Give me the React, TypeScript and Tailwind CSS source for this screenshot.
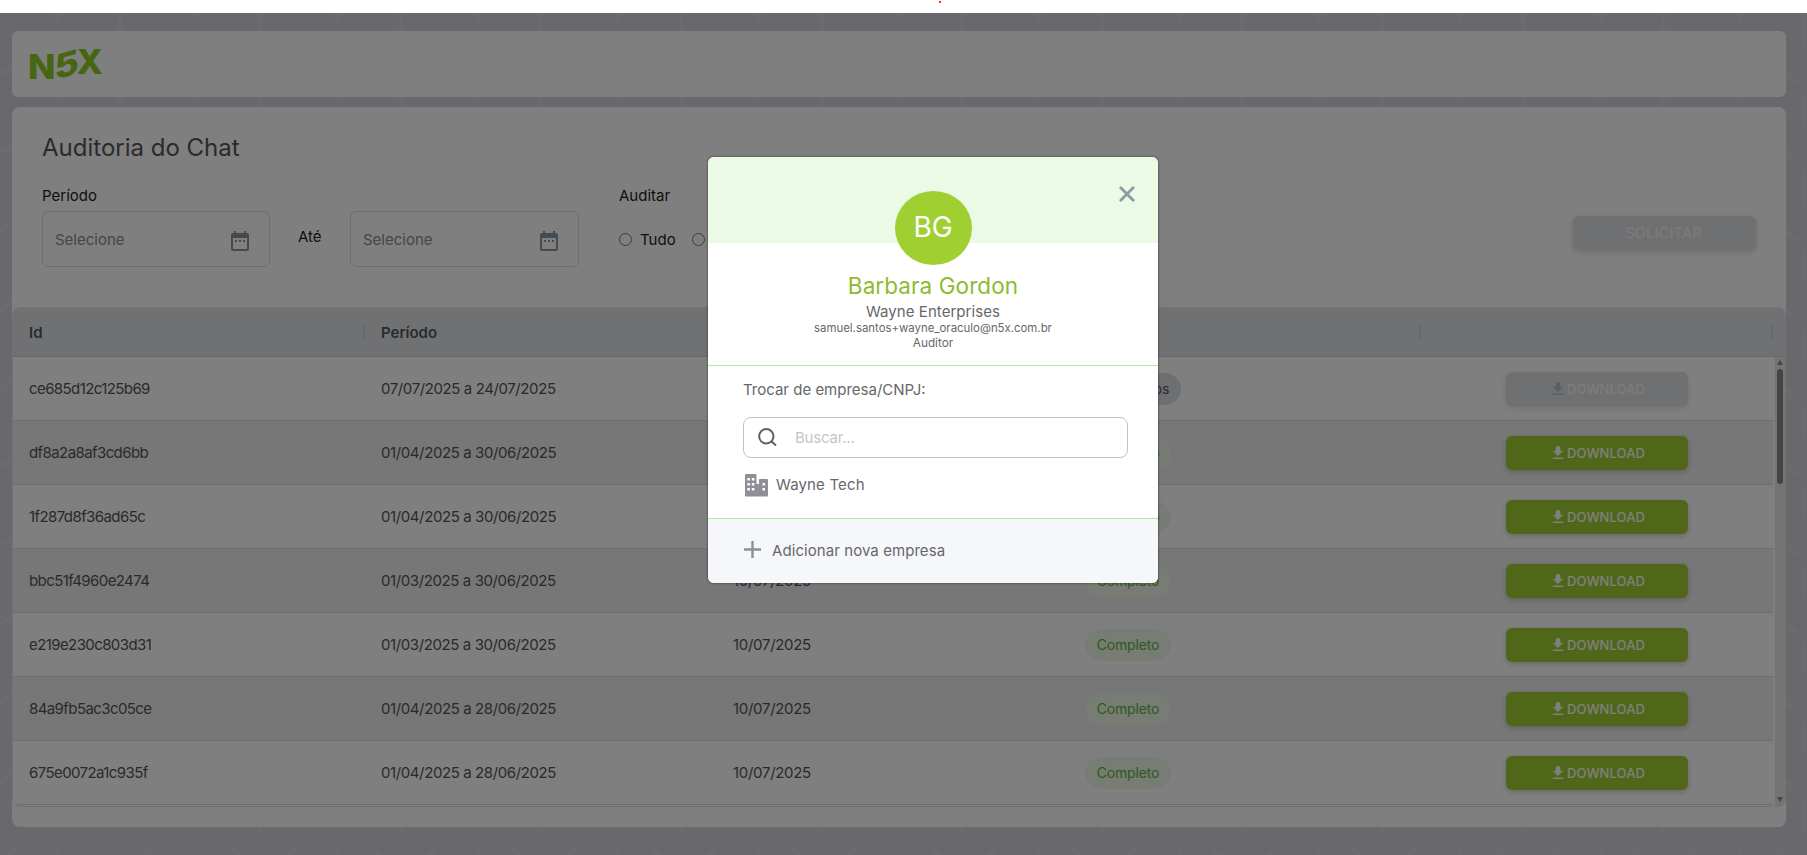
import { MdDownload, MdDateRange } from "react-icons/md";

const rows = [
  { id: "ce685d12c125b69", period: "07/07/2025 a 24/07/2025", date: "24/07/2025", done: false },
  { id: "df8a2a8af3cd6bb", period: "01/04/2025 a 30/06/2025", date: "10/07/2025", done: true },
  { id: "1f287d8f36ad65c", period: "01/04/2025 a 30/06/2025", date: "10/07/2025", done: true },
  { id: "bbc51f4960e2474", period: "01/03/2025 a 30/06/2025", date: "10/07/2025", done: true },
  { id: "e219e230c803d31", period: "01/03/2025 a 30/06/2025", date: "10/07/2025", done: true },
  { id: "84a9fb5ac3c05ce", period: "01/04/2025 a 28/06/2025", date: "10/07/2025", done: true },
  { id: "675e0072a1c935f", period: "01/04/2025 a 28/06/2025", date: "10/07/2025", done: true },
];

const columns = ["Id", "Período", "Data", "Status", ""];

function Backdrop() {
  return (
    <svg className="absolute inset-0 h-full w-full">
      <defs>
        <pattern id="cubes" width="140.3" height="78.5" patternUnits="userSpaceOnUse" patternTransform="translate(0 -13)">
          <g stroke="#d6d9df" strokeWidth="3.5" fill="none">
            <path d="M57 0V22M57 65V79M120 15V47" />
            <path d="M-10 84L15 63M130.3 84L155.3 63M90 63L114 84" />
            <path d="M-10 5.5L15 -15.5M130.3 5.5L155.3 -15.5M90 -15.5L114 5.5" />
          </g>
        </pattern>
      </defs>
      <rect width="100%" height="100%" fill="url(#cubes)" />
    </svg>
  );
}

function Logo() {
  return (
    <svg width="100" height="60" viewBox="0 0 100 60" className="ml-2" fill="#8ccc22" fontFamily="Inter, sans-serif" fontWeight="800" fontSize="34">
      <text transform="translate(8 45) scale(1.06 1)">N</text>
      <text transform="translate(34.500 46) skewY(-16) scale(1.1 1)">5</text>
      <text transform="translate(56.500 40) scale(1.02 1)">X</text>
    </svg>
  );
}

function DateField() {
  return (
    <div className="flex h-14 w-full items-center justify-between rounded-md border border-[#dcdcdc] pl-3 pr-[17px]">
      <span className="pt-0.5 text-[15px] text-[#8c8c8c]">Selecione</span>
      <MdDateRange className="mt-1 size-6 text-[#8694a0]" />
    </div>
  );
}

function Filters() {
  return (
    <div className="flex h-[72px] items-start text-[15px]">
      <div className="w-[228px]">
        <div className="h-[27px] pt-px leading-[22px]">Período</div>
        <DateField />
      </div>
      <div className="w-20 pl-7 pt-[42px] leading-[22px]">Até</div>
      <div className="w-[229px] pt-[27px]">
        <DateField />
      </div>
      <div className="ml-10 pt-px">
        <div className="leading-[22px]">Auditar</div>
        <div className="mt-[22px] flex items-center leading-[22px]">
          <span className="mb-0.5 mr-2 size-[13px] rounded-full border border-[#767676]" />
          Tudo
          <span className="mb-0.5 ml-4 mr-2 size-[13px] rounded-full border border-[#767676]" />
          Sala
        </div>
      </div>
      <button className="ml-auto mr-[30px] mt-8 h-[34px] w-[183px] rounded-md bg-[#dde0e3] pr-0.5 pt-px text-[15px] text-[#f8f9fa] shadow-[0_2px_6px_rgba(0,0,0,0.15)]">
        SOLICITAR
      </button>
    </div>
  );
}

function Table() {
  return (
    <div className="mt-[51px] h-[500px] overflow-hidden rounded-lg border border-[#e6e6e6]">
      <div className="flex h-[49px] border-b border-[#d0d0d3] bg-[#e1e3e5]">
        {columns.map((name, i) => (
          <div key={i} className="flex w-[352px] items-center justify-between pl-4 text-[15px] font-semibold text-[#55565a]">
            <span className="pt-0.5">{name}</span>
            <span className="h-[14px] w-0.5 bg-[#d0d2d4]" />
          </div>
        ))}
      </div>
      <div className="flex h-[449px]">
        <div className="w-[1760px]">
          {rows.map((row) => (
            <div key={row.id} className="flex h-16 items-center border-b border-[#dcdcdc] text-[15px] text-[#545458] even:bg-[#efefef]">
              <div className="w-[352px] pl-4 pt-0.5 tracking-[-0.59px]">{row.id}</div>
              <div className="w-[352px] pl-4 pt-0.5 tracking-[-0.4px]">{row.period}</div>
              <div className="w-[352px] pl-4 pt-0.5 tracking-[-0.3px]">{row.date}</div>
              <div className="w-[352px] pl-4">
                {row.done ? (
                  <span className="flex h-8 w-[86px] items-center justify-center rounded-full bg-[#eef9ea] text-sm tracking-[-0.15px] text-[#62b535]">Completo</span>
                ) : (
                  <span className="flex h-8 w-24 items-center justify-center rounded-full bg-[#dcdfe4] text-sm tracking-[-0.2px]">Sem dados</span>
                )}
              </div>
              <div className="flex w-[352px] justify-center">
                <button
                  className={
                    row.done
                      ? "flex h-[34px] w-[182px] items-center justify-center rounded-md bg-[#a0ce32] text-[13px] font-medium text-white shadow-[0_2px_6px_rgba(0,0,0,0.18)]"
                      : "flex h-[34px] w-[182px] items-center justify-center rounded-md bg-[#dde0e3] text-[13px] font-medium text-[#f8f9fa] shadow-[0_2px_6px_rgba(0,0,0,0.12)]"
                  }
                >
                  <MdDownload className={row.done ? "mt-px size-[18px]" : "mt-px size-[18px] text-[#b9bdc6]"} />
                  <span className="pt-0.5 tracking-[0.1px]">DOWNLOAD</span>
                </button>
              </div>
            </div>
          ))}
        </div>
        <div className="ml-0.5 flex flex-1 flex-col items-center bg-[#e8e8e8] pt-[3px]">
          <span className="border-x-[3px] border-b-[5px] border-x-transparent border-b-[#888]" />
          <span className="mt-1 h-[115px] w-1.5 rounded-full bg-[#888]" />
          <span className="mb-1 mt-auto border-x-[3px] border-t-[5px] border-x-transparent border-t-[#888]" />
        </div>
      </div>
    </div>
  );
}

function ProfileModal() {
  return (
    <div className="absolute left-[708px] top-[144px] flex h-[426px] w-[450px] flex-col overflow-hidden rounded-md bg-white text-base text-[#66676a] shadow-[0_0_2px_1px_rgba(0,0,0,0.25)]">
      <div className="relative flex h-[86px] shrink-0 justify-center bg-[#eafae5]">
        <div className="mt-[34px] flex h-[74px] w-[77px] items-center justify-center rounded-[50%] bg-[#a0cf32] pb-0.5 text-[28px] text-white">BG</div>
        <svg width="16" height="16" viewBox="0 0 16 16" className="absolute right-[23px] top-[29px]" stroke="#8b9ba1" strokeWidth="2.8" strokeLinecap="round">
          <path d="M1.8 1.8L14.2 14.2M14.2 1.8L1.8 14.2" />
        </svg>
      </div>
      <div className="flex h-[123px] shrink-0 flex-col items-center border-b border-[#b2e99a] pt-[27px]">
        <div className="text-[22.500px] leading-8 tracking-[0.08px] text-[#8fba2f]">Barbara Gordon</div>
        <div className="text-[15px] leading-5 tracking-[0.06px]">Wayne Enterprises</div>
        <div className="-mt-px text-[11.400px] leading-[15px]">samuel.santos+wayne_oraculo@n5x.com.br</div>
        <div className="text-[11.800px] leading-[15px]">Auditor</div>
      </div>
      <div className="flex h-[153px] shrink-0 flex-col border-b border-[#b2e99a] pl-[35px] pr-[30px] pt-3 text-[15px]">
        <div className="leading-6">Trocar de empresa/CNPJ:</div>
        <div className="mt-[15px] flex h-[41px] items-center rounded-lg border border-[#c2c3c5]">
          <svg width="19" height="19" viewBox="0 0 19 19" className="ml-3.5" fill="none" stroke="#5f6164" strokeWidth="2">
            <circle cx="8.3" cy="8.3" r="7.2" />
            <path d="M13 13L18 17.6" />
          </svg>
          <span className="ml-[18px] pt-0.5 tracking-[-0.2px] text-[#c4c5c7]">Buscar...</span>
        </div>
        <div className="mt-4 flex h-[23px] items-center">
          <svg width="23" height="23" viewBox="0 0 23 23" className="ml-0.5" fill="#908f98">
            <path d="M1 0H10.500Q11.500 0 11.500 1V10H14V5.500Q14 5 15 5H22Q23 5 23 6V21Q23 22.500 22 22.500H1Q0 22.500 0 21.500V1Q0 0 1 0Z" />
            <path fill="#fff" d="M2.300 4h2.600v2.500H2.300zM6.800 4h2.600v2.500H6.800zM2.300 9h2.600v2.500H2.300zM6.800 9h2.600v2.500H6.800zM2.300 14h2.600v2.500H2.300zM6.800 14h2.600v2.500H6.800zM17.500 9h2.500v2.500h-2.500zM17.500 14h2.500v2.500h-2.500z" />
          </svg>
          <span className="ml-2 tracking-[0.15px]">Wayne Tech</span>
        </div>
      </div>
      <div className="flex flex-1 items-center bg-[#f6f7fa] pl-9 text-[15px]">
        <svg width="17" height="17" viewBox="0 0 17 17" className="mb-1" stroke="#8e8e97" strokeWidth="2.4">
          <path d="M8.500 0V17M0 8.500H17" />
        </svg>
        <span className="ml-[11px] tracking-[0.07px]">Adicionar nova empresa</span>
      </div>
    </div>
  );
}

export default function App() {
  return (
    <div className="h-[855px] w-[1807px] overflow-hidden bg-white font-['Inter',sans-serif] text-[#1c1c1e]">
      <div className="flex h-[13px] justify-center pl-[72px] pt-px">
        <span className="size-0.5 bg-[#f0303a]" />
      </div>
      <div className="relative h-[842px] bg-[#d2d0da]">
        <Backdrop />
        <div className="relative flex flex-col gap-2.5 pl-3 pr-[21px] pt-[18px]">
          <header className="flex h-[66px] items-center rounded-md bg-white">
            <Logo />
          </header>
          <main className="h-[720px] rounded-lg bg-white">
            <div className="pl-[30px] pt-[25px]">
              <h1 className="h-[52px] text-2xl leading-8 text-[#55565a]">Auditoria do Chat</h1>
              <Filters />
            </div>
            <Table />
          </main>
        </div>
        <div className="absolute inset-0 bg-black/50" />
        <ProfileModal />
      </div>
    </div>
  );
}
